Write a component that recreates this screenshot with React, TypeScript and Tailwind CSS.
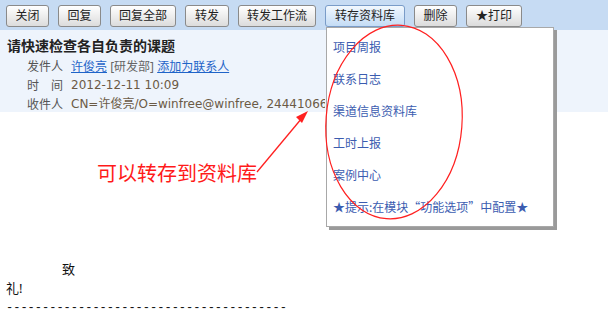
import React from 'react';

const font = { fontFamily: '"Noto Sans", "Noto Sans CJK SC", sans-serif' };
const latin = { fontFamily: '"DejaVu Sans", "Noto Sans CJK SC", sans-serif' };

const buttons = [
  { label: '关闭', w: 'w-[43px]' },
  { label: '回复', w: 'w-[43px]' },
  { label: '回复全部', w: 'w-[66px]' },
  { label: '转发', w: 'w-[44px]' },
  { label: '转发工作流', w: 'w-[78px]' },
  { label: '转存资料库', w: 'w-[80px]', active: true },
  { label: '删除', w: 'w-[43px]' },
  { label: '★打印', w: 'w-[56px]' },
];

const menuItems = ['项目周报', '联系日志', '渠道信息资料库', '工时上报', '案例中心', '★提示:在模块“功能选项”中配置★'];

function App() {
  return (
    <div className="relative w-[608px] h-[314px] overflow-hidden bg-white text-[12px] text-[#333]" style={font}>
      {/* Toolbar */}
      <div className="flex h-[30px] items-start gap-[9px] bg-[#c6dbf3] pl-[6px] pt-[5px]">
        {buttons.map((b) => (
          <div
            key={b.label}
            className={`${b.w} flex h-[22px] items-center justify-center rounded-[3px] border text-[12px] leading-none ${
              b.active
                ? 'border-[#7a9cc8] bg-gradient-to-b from-[#f2f8fe] to-[#c4dcf5] text-[#222]'
                : 'border-[#8a8a8a] bg-gradient-to-b from-[#ffffff] to-[#dcdcdc] text-[#222]'
            }`}
          >
            {b.label}
          </div>
        ))}
      </div>

      {/* Mail header */}
      <div className="h-[82px] bg-[#eef4fc] pl-[7px] pt-[7px]">
        <div className="text-[14px] font-bold leading-[18px] text-[#222]">请快速检查各自负责的课题</div>
        <div className="mt-[2px] pl-[20px] leading-[19px] text-[#555]">
          <div className="flex whitespace-nowrap">
            <span className="w-[36px] [text-align-last:justify]">发件人</span>
            <span className="ml-[8px]">
              <span className="text-[#1f64c8] underline">许俊亮</span>
              <span className="text-[#666]"> [研发部] </span>
              <span className="text-[#1f64c8] underline">添加为联系人</span>
            </span>
          </div>
          <div className="flex whitespace-nowrap">
            <span className="w-[36px] [text-align-last:justify]">时间</span>
            <span className="ml-[8px] text-[#6b5a45]" style={latin}>2012-12-11 10:09</span>
          </div>
          <div className="flex whitespace-nowrap">
            <span className="w-[36px] [text-align-last:justify]">收件人</span>
            <span className="ml-[8px] w-[254px] overflow-hidden text-[#6b5a45]" style={latin}>
              CN=许俊亮/O=winfree@winfree, 2444106625@qq.com
            </span>
          </div>
        </div>
      </div>

      {/* Body */}
      <div className="pl-[6px] pt-[148px] text-[13px] leading-[19px] text-[#111]">
        <div className="pl-[56px]">致</div>
        <div>礼!</div>
        <div className="text-[12px] leading-[21px]" style={{ fontFamily: '"Liberation Mono", monospace' }}>
          ---------------------------------------
        </div>
      </div>

      {/* Dropdown menu */}
      <div className="absolute left-[326px] top-[27px] h-[200px] w-[228px] border border-[#a8a8a8] bg-white pt-[3px] shadow-[3px_3px_0_#9a9a9a]">
        {menuItems.map((m) => (
          <div
            key={m}
            className="flex h-[32px] items-center whitespace-nowrap pl-[6px] text-[12px] text-[#3b5cb0]"
            style={{ fontFamily: '"Noto Sans CJK SC", sans-serif' }}
          >
            {m}
          </div>
        ))}
      </div>

      {/* Annotation text */}
      <div className="absolute left-[97px] top-[161px] text-[20px] leading-[26px] text-[#ff1a1a]">可以转存到资料库</div>

      {/* Annotation drawing */}
      <svg className="pointer-events-none absolute left-0 top-0" width="608" height="314">
        <ellipse cx="394" cy="122" rx="68" ry="97" fill="none" stroke="#ff2020" strokeWidth="1.2" transform="rotate(4.5 394 122)" />
        <line x1="257" y1="172" x2="302" y2="118" stroke="#ff2020" strokeWidth="1.3" />
        <polygon points="308,111 296,117 302,123" fill="#ff2020" />
      </svg>
    </div>
  );
}

export default App;
